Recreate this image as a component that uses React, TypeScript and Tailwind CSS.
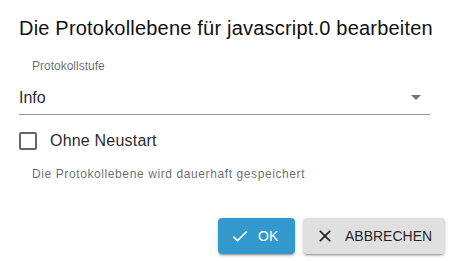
import React from "react";

export default function App() {
  return (
    <div
      className="w-[451px] h-[261px] bg-white flex flex-col text-[rgba(0,0,0,0.87)]"
      style={{ fontFamily: '"Liberation Sans", Arial, sans-serif' }}
    >
      <div className="pl-[19px] pt-[12px] text-[20px] leading-[32px] tracking-[0.2px] text-[#111]">
        Die Protokollebene für javascript.0 bearbeiten
      </div>
      <div className="pl-[19px] pr-[21px] mt-[15px]">
        <div className="pl-[13px] text-[12px] leading-[14px] text-[rgba(0,0,0,0.6)]">Protokollstufe</div>
        <div className="flex items-center h-[32px] mt-[10px] border-b border-[rgba(0,0,0,0.42)]">
          <div className="flex-1 text-[16px] leading-[20px] pb-[2px]">Info</div>
          <svg width="24" height="24" viewBox="0 0 24 24" className="mr-[2px] mb-[4px]">
            <path d="M7 10l5 5 5-5z" fill="rgba(0,0,0,0.54)" />
          </svg>
        </div>
      </div>
      <div className="flex items-center pl-[19px] mt-[17px] h-[18px]">
        <div className="w-[18px] h-[18px] rounded-[2px] border-2 border-[rgba(0,0,0,0.6)]" />
        <span className="ml-[13px] text-[16px] leading-[20px] tracking-[0.2px]">Ohne Neustart</span>
      </div>
      <div className="pl-[32px] mt-[17px] text-[12px] leading-[14px] tracking-[0.6px] text-[rgba(0,0,0,0.6)]">
        Die Protokollebene wird dauerhaft gespeichert
      </div>
      <div className="flex justify-end gap-[8px] pr-[6px] mt-[37px]">
        <button className="flex items-center h-[36px] w-[77px] pl-[12px] rounded-[4px] bg-[#3399cc] text-white text-[14px] shadow-[0_3px_1px_-2px_rgba(0,0,0,0.2),0_2px_2px_0_rgba(0,0,0,0.14),0_1px_5px_0_rgba(0,0,0,0.12)]">
          <svg width="20" height="20" viewBox="0 0 24 24" className="mr-[8px]">
            <path d="M9 16.17L4.83 12l-1.42 1.41L9 19 21 7l-1.41-1.41z" fill="white" />
          </svg>
          OK
        </button>
        <button className="flex items-center h-[36px] w-[142px] pl-[12px] rounded-[4px] bg-[#e0e0e0] text-[rgba(0,0,0,0.87)] text-[14px] shadow-[0_3px_1px_-2px_rgba(0,0,0,0.2),0_2px_2px_0_rgba(0,0,0,0.14),0_1px_5px_0_rgba(0,0,0,0.12)]">
          <svg width="20" height="20" viewBox="0 0 24 24" className="mr-[10px]">
            <path d="M19 6.41L17.59 5 12 10.59 6.41 5 5 6.41 10.59 12 5 17.59 6.41 19 12 13.41 17.59 19 19 17.59 13.41 12z" fill="rgba(0,0,0,0.87)" />
          </svg>
          ABBRECHEN
        </button>
      </div>
    </div>
  );
}
